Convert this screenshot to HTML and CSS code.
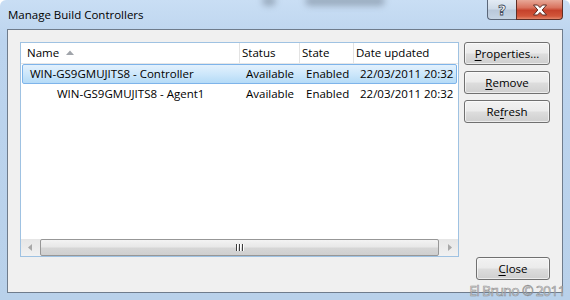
FILE: index.html
```html
<!DOCTYPE html>
<html>
<head>
<meta charset="utf-8">
<link rel="stylesheet" href="styles.css">
</head>
<body>
<div class="window">
  <div class="glass-smudge s1"></div>
  <div class="glass-smudge s2"></div>
  <div class="titlebar">
    <span class="title">Manage Build Controllers</span>
    <div class="caption-buttons">
      <div class="cap cap-help"><span class="q">?</span></div>
      <div class="cap cap-close">
        <svg width="16" height="12" viewBox="0 0 16 12"><path d="M1.5 1 H5.5 L8 3.6 L10.5 1 H14.5 L10.2 6 L14.5 11 H10.5 L8 8.4 L5.5 11 H1.5 L5.8 6 Z" fill="#fff" stroke="#5a2a22" stroke-width="1" stroke-linejoin="round"/></svg>
      </div>
    </div>
  </div>
  <div class="client">
    <div class="listview">
      <div class="lv-header">
        <div class="hcell h-name">Name <svg class="sort" width="8" height="5" viewBox="0 0 8 5"><path d="M0 5 L4 0.5 L8 5 Z" fill="#a0a4aa"/></svg></div>
        <div class="hcell">Status</div>
        <div class="hcell">State</div>
        <div class="hcell last">Date updated</div>
      </div>
      <div class="lv-body">
        <div class="row selected">
          <div class="cell c-name">WIN-GS9GMUJITS8 - Controller</div>
          <div class="cell">Available</div>
          <div class="cell">Enabled</div>
          <div class="cell">22/03/2011 20:32</div>
        </div>
        <div class="row">
          <div class="cell c-name child">WIN-GS9GMUJITS8 - Agent1</div>
          <div class="cell">Available</div>
          <div class="cell">Enabled</div>
          <div class="cell">22/03/2011 20:32</div>
        </div>
      </div>
      <div class="hscroll">
        <div class="sb-arrow"><svg width="4" height="7" viewBox="0 0 4 7"><path d="M4 0 L0 3.5 L4 7 Z" fill="#a8a8a8"/></svg></div>
        <div class="sb-track">
          <div class="sb-thumb"><span class="grip"></span><span class="grip"></span><span class="grip"></span></div>
        </div>
        <div class="sb-arrow"><svg width="4" height="7" viewBox="0 0 4 7"><path d="M0 0 L4 3.5 L0 7 Z" fill="#a8a8a8"/></svg></div>
      </div>
    </div>
    <div class="side-buttons">
      <button class="btn"><u>P</u>roperties...</button>
      <button class="btn"><u>R</u>emove</button>
      <button class="btn">Re<u>f</u>resh</button>
    </div>
    <div class="bottom-buttons">
      <button class="btn"><u>C</u>lose</button>
    </div>
  </div>
  <div class="watermark">El Bruno © 2011</div>
</div>
</body>
</html>
```

FILE: styles.css
```css
html, body {
  margin: 0;
  padding: 0;
  background: #ffffff;
}

.window {
  position: relative;
  width: 570px;
  height: 300px;
  box-sizing: border-box;
  padding: 0 7px 7px 7px;
  display: flex;
  flex-direction: column;
  background: linear-gradient(to bottom, #c9def4 0px, #bcd4ee 40px, #b9d1ea 100%);
  border-radius: 6px 6px 0 0;
  overflow: hidden;
  font-family: "Open Sans", "Noto Sans", sans-serif;
  font-size: 11.5px;
  color: #000;
}

.glass-smudge {
  position: absolute;
  top: -4px;
  height: 10px;
  background: rgba(70, 80, 95, 0.35);
  filter: blur(3px);
  border-radius: 5px;
}
.glass-smudge.s1 { left: 262px; width: 14px; }
.glass-smudge.s2 { left: 305px; width: 80px; }

.titlebar {
  height: 29px;
  flex: none;
  display: flex;
  justify-content: space-between;
  align-items: flex-start;
}

.title {
  margin-top: 7px;
  margin-left: 1px;
  font-size: 11.5px;
  line-height: 16px;
  color: #000;
}

.caption-buttons {
  display: flex;
  height: 20px;
}

.cap {
  box-sizing: border-box;
  height: 20px;
  display: flex;
  align-items: center;
  justify-content: center;
  border: 1px solid #5b6779;
  border-top: none;
}

.cap-help {
  width: 29px;
  border-right: none;
  border-radius: 0 0 0 4px;
  background: linear-gradient(to bottom, #e3ebf4 0%, #cfdbe8 45%, #b9c8da 55%, #c5d4e4 100%);
}

.cap-help .q {
  font-family: "DejaVu Sans", sans-serif;
  font-weight: bold;
  font-size: 14px;
  color: #ffffff;
  -webkit-text-stroke: 0.8px #3e4a5a;
  line-height: 16px;
}

.cap-close {
  width: 47px;
  border-radius: 0 0 4px 0;
  background: linear-gradient(to bottom, #e8a897 0%, #d9735e 40%, #c6422b 55%, #d2563a 85%, #e3876b 100%);
  border-color: #5f2f26;
}

.client {
  flex: 1;
  box-sizing: border-box;
  border: 1px solid #6f7c8c;
  background: #f0f0f0;
  padding: 12px;
  display: grid;
  grid-template-columns: 439px 86px;
  grid-template-rows: 1fr 23px;
  column-gap: 5px;
}

.listview {
  grid-row: 1;
  grid-column: 1;
  box-sizing: border-box;
  border: 1px solid #9fc2e2;
  background: #ffffff;
  display: flex;
  flex-direction: column;
}

.lv-header {
  display: grid;
  grid-template-columns: 219px 60px 54px 1fr;
  height: 21px;
  box-sizing: border-box;
  border-bottom: 1px solid #e6e6e6;
  flex: none;
}

.hcell {
  box-sizing: border-box;
  border-right: 1px solid #e3e3e3;
  padding-left: 2px;
  line-height: 20px;
  white-space: nowrap;
  display: flex;
  align-items: center;
}
.hcell.h-name { padding-left: 6px; }
.hcell.last { border-right: none; }

.sort {
  margin-left: 7px;
  margin-top: -2px;
}

.lv-body {
  flex: 1;
}

.row {
  display: grid;
  grid-template-columns: 217px 60px 54px 1fr;
  height: 20px;
  box-sizing: border-box;
  margin: 0 1px;
  border: 1px solid transparent;
  border-radius: 2px;
}

.row.selected {
  border-color: #7eb4ea;
  background: linear-gradient(to bottom, #e3f1fd 0%, #cfe8fb 45%, #b5dbf7 100%);
}

.cell {
  padding-left: 6px;
  line-height: 18px;
  white-space: nowrap;
}
.cell.c-name { padding-left: 7px; }
.cell.c-name.child { padding-left: 34px; }

.hscroll {
  flex: none;
  height: 17px;
  display: flex;
  background: linear-gradient(to bottom, #e6e6e6, #f1f1f1);
}

.sb-arrow {
  width: 17px;
  flex: none;
  display: flex;
  align-items: center;
  justify-content: center;
}

.sb-track {
  flex: 1;
  display: flex;
  padding: 0 2px;
}

.sb-thumb {
  flex: 1;
  box-sizing: border-box;
  border: 1px solid #979797;
  border-radius: 2px;
  background: linear-gradient(to bottom, #f3f3f3 0%, #e8e8e8 45%, #d6d6d6 55%, #cfcfcf 100%);
  display: flex;
  justify-content: center;
  align-items: center;
  gap: 1px;
}

.grip {
  width: 1px;
  height: 7px;
  background: #3d3d3d;
  box-shadow: 1px 0 0 #ffffff;
  margin-right: 1px;
}

.side-buttons {
  grid-row: 1;
  grid-column: 2;
  display: flex;
  flex-direction: column;
  gap: 6px;
}

.bottom-buttons {
  grid-row: 2;
  grid-column: 2;
  display: flex;
  justify-content: flex-end;
}

.btn {
  width: 86px;
  height: 23px;
  box-sizing: border-box;
  padding: 0;
  margin: 0;
  border: 1px solid #707070;
  border-radius: 3px;
  background: linear-gradient(to bottom, #f2f2f2 0%, #ebebeb 48%, #dddddd 52%, #cfcfcf 100%);
  box-shadow: inset 0 0 0 1px rgba(255, 255, 255, 0.6);
  font-family: "Open Sans", "Noto Sans", sans-serif;
  font-size: 11.5px;
  color: #000;
  line-height: 20px;
}

.bottom-buttons .btn {
  width: 74px;
}

.btn u {
  text-decoration: underline;
  text-underline-offset: 2px;
}

.watermark {
  position: absolute;
  right: 5px;
  bottom: 1px;
  font-family: "Open Sans", "Noto Sans", sans-serif;
  font-size: 14px;
  line-height: 16px;
  letter-spacing: -0.7px;
  color: rgba(235, 235, 235, 0.7);
  -webkit-text-stroke: 0.6px rgba(120, 120, 120, 0.8);
}
```
